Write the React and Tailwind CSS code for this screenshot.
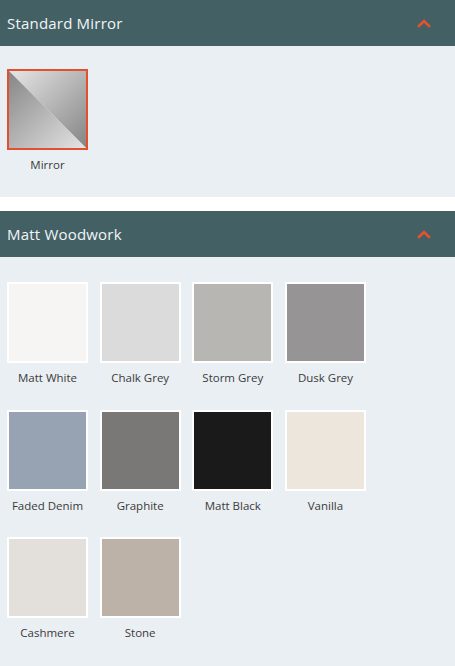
import React from "react";

const SWATCHES = [
  { name: "Matt White", color: "bg-[#f6f5f3]" },
  { name: "Chalk Grey", color: "bg-[#dbdbdb]" },
  { name: "Storm Grey", color: "bg-[#b7b6b3]" },
  { name: "Dusk Grey", color: "bg-[#979495]" },
  { name: "Faded Denim", color: "bg-[#97a3b2]" },
  { name: "Graphite", color: "bg-[#7a7777]" },
  { name: "Matt Black", color: "bg-[#1a1a1a]" },
  { name: "Vanilla", color: "bg-[#ede6dc]" },
  { name: "Cashmere", color: "bg-[#e3dfdb]" },
  { name: "Stone", color: "bg-[#bcb2a8]" },
];

function Chevron() {
  return (
    <svg width="14" height="10" viewBox="0 0 14 10" className="mr-[24px]">
      <path d="M2 8 L7 3 L12 8" fill="none" stroke="#e8512f" strokeWidth="2.6" strokeLinecap="square" />
    </svg>
  );
}

function Header({ title }) {
  return (
    <div className="h-[46px] bg-[#436065] flex items-center justify-between pl-[7px]">
      <span className="text-[15px] text-[#f2f5f5] tracking-[0.2px]">{title}</span>
      <Chevron />
    </div>
  );
}

function MirrorTile() {
  return (
    <div className="w-[81px] h-[81px] border-2 border-[#e4502f]">
      <svg width="77" height="77" viewBox="0 0 77 77" className="block">
        <defs>
          <linearGradient id="up" x1="0" y1="0" x2="1" y2="1">
            <stop offset="0" stopColor="#e6e6e6" />
            <stop offset="1" stopColor="#858585" />
          </linearGradient>
          <linearGradient id="lo" x1="0" y1="0" x2="1" y2="1">
            <stop offset="0" stopColor="#868686" />
            <stop offset="1" stopColor="#e4e4e4" />
          </linearGradient>
        </defs>
        <polygon points="0,0 77,0 77,77" fill="url(#up)" />
        <polygon points="0,0 77,77 0,77" fill="url(#lo)" />
      </svg>
    </div>
  );
}

function Label({ children }) {
  return <div className="mt-[7px] leading-4 text-[11.5px] text-[#3a3a3a] text-center whitespace-nowrap">{children}</div>;
}

export default function App() {
  return (
    <div className="w-[455px] h-[666px] bg-white overflow-hidden" style={{ fontFamily: '"Open Sans", "Liberation Sans", sans-serif' }}>
      {/* Standard Mirror */}
      <Header title="Standard Mirror" />
      <div className="bg-[#eaeff3] h-[151px] pt-[23px] pl-[7px]">
        <div className="w-[81px]">
          <MirrorTile />
          <Label>Mirror</Label>
        </div>
      </div>

      {/* Matt Woodwork */}
      <div className="mt-[14px]">
        <Header title="Matt Woodwork" />
        <div className="bg-[#eaeff3] h-[409px] pt-[25px] pl-[7px]">
          <div className="grid grid-cols-[repeat(4,81px)] gap-x-[11.67px] gap-y-[23.5px]">
            {SWATCHES.map((s) => (
              <div key={s.name} className="w-[81px]">
                <div className={`w-[81px] h-[81px] border-2 border-white ${s.color}`} />
                <Label>{s.name}</Label>
              </div>
            ))}
          </div>
        </div>
      </div>
    </div>
  );
}
